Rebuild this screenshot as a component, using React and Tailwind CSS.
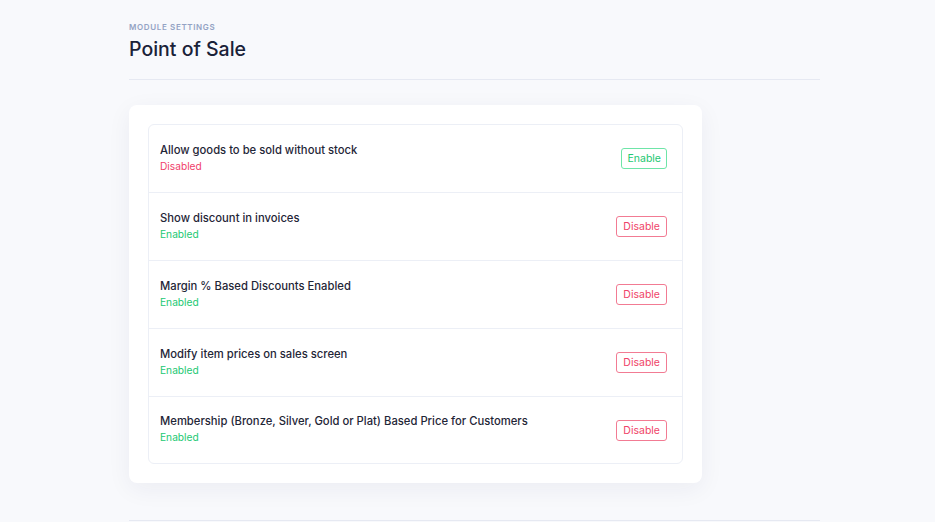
import React from "react";

const rows = [
  { title: "Allow goods to be sold without stock", enabled: false },
  { title: "Show discount in invoices", enabled: true },
  { title: "Margin % Based Discounts Enabled", enabled: true },
  { title: "Modify item prices on sales screen", enabled: true },
  { title: "Membership (Bronze, Silver, Gold or Plat) Based Price for Customers", enabled: true },
];

export default function App() {
  return (
    <div className="min-h-[522px] w-full bg-[#f8f9fc] font-['Inter',sans-serif] antialiased">
      <div className="ml-[129px] w-[691px] pt-[22px]">
        <div className="text-[8px] leading-[10px] font-semibold uppercase tracking-[0.08em] text-[#94a3c4]">
          Module Settings
        </div>
        <h1 className="mt-[3px] text-[19.5px] leading-[28px] font-medium text-[#1a2238]">Point of Sale</h1>
        <div className="mt-[16px] border-t border-[#e6e9f2]" />
        <div className="mt-[25px] w-[573px] rounded-lg bg-white px-[19px] pt-[19px] pb-[19px] shadow-[0_6px_24px_rgba(30,40,90,0.06)]">
          <div className="rounded-md border border-[#eceff6]">
            {rows.map((r, i) => (
              <div
                key={i}
                className={`flex items-center justify-between pl-[11px] pr-[15px] ${i < rows.length - 1 ? "h-[68px] border-b border-[#eceff6]" : "h-[66px]"}`}
              >
                <div className="pb-[2px]">
                  <div className="text-[11.25px] leading-[16px] font-medium text-[#1f2637]">{r.title}</div>
                  <div
                    className={`text-[10.2px] leading-[16px] ${r.enabled ? "text-[#22c872]" : "text-[#f0406a]"}`}
                  >
                    {r.enabled ? "Enabled" : "Disabled"}
                  </div>
                </div>
                {r.enabled ? (
                  <button className="h-[21px] rounded-[3px] border border-[#f27b93] bg-white px-[6px] text-[10.5px] leading-[19px] text-[#ef4468]">
                    Disable
                  </button>
                ) : (
                  <button className="h-[21px] rounded-[3px] border border-[#6ee5a8] bg-white px-[5px] text-[10.5px] leading-[19px] text-[#22c872]">
                    Enable
                  </button>
                )}
              </div>
            ))}
          </div>
        </div>
        <div className="mt-[37px] border-t border-[#e6e9f2]" />
      </div>
    </div>
  );
}
